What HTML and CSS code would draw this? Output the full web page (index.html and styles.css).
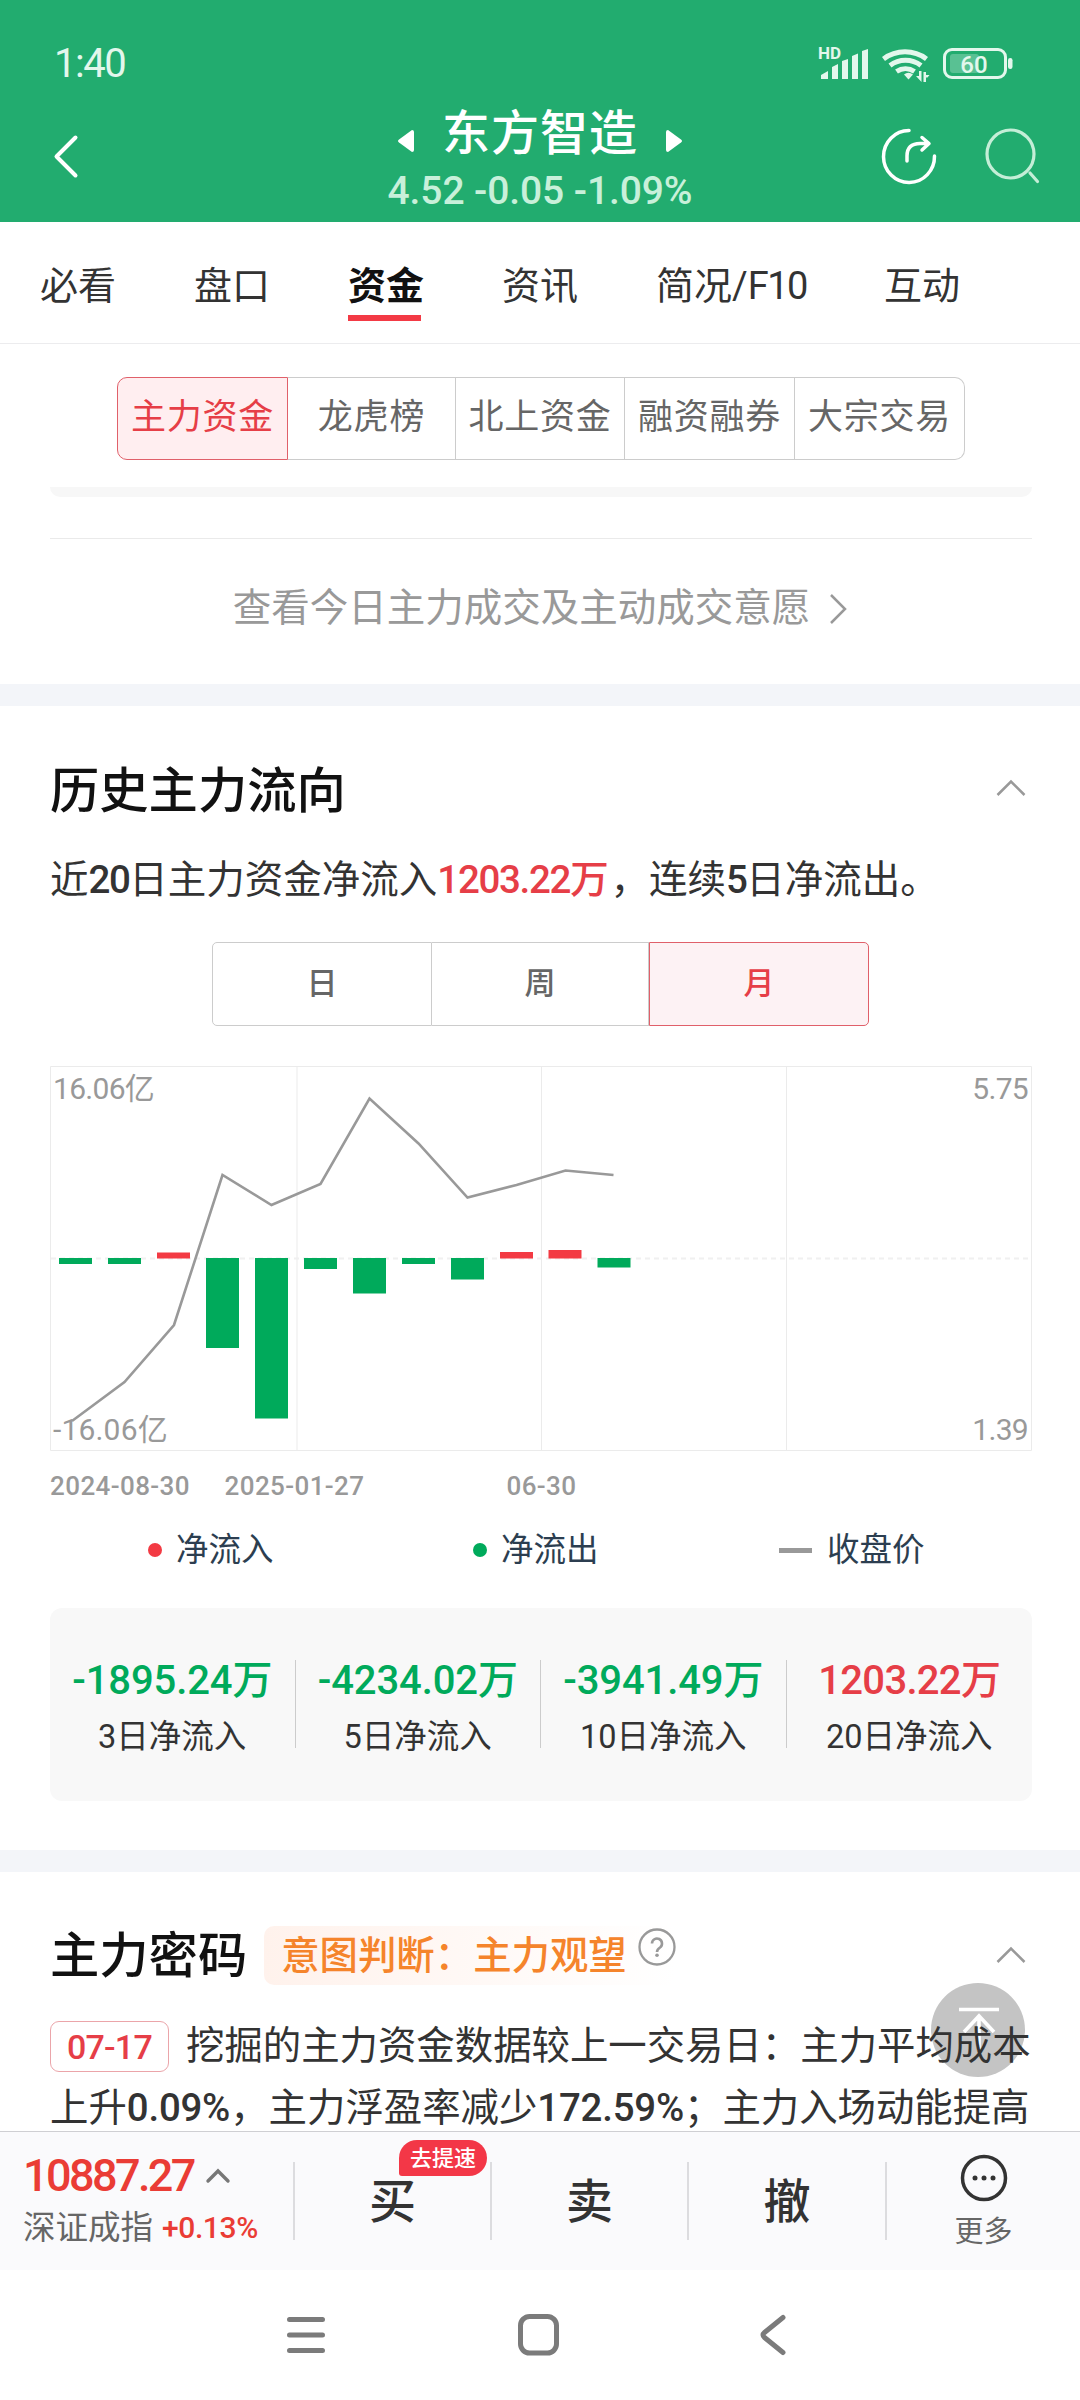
FILE: index.html
```html
<!DOCTYPE html>
<html lang="zh-CN">
<head>
    <meta charset="UTF-8">
    <meta name="viewport" content="width=device-width, initial-scale=1.0">
    <title>东方智造 - 资金</title>
    <link rel="stylesheet" href="styles.css">
</head>
<body>
    <header class="header">
        <div class="status-bar">
            <span class="time">1:40</span>
            <svg class="status-icons" width="200" height="44" viewBox="0 0 200 44" fill="none">
                <text class="hd" x="4" y="18">HD</text>
                <g fill="#e3f7ec">
                    <path d="M7 38v-4l7-4v8zM18 38V26l6-3v15zM28 38V20l6-2v20zM38 38V15l6-2.500v25.500zM48 38V10l6-2v30z"></path>
                    <path d="M90 33.500a7 7 0 0 1 9 0l-4.500 5z"></path>
                    <path d="M102 35h3v-5h2.500v11zM109.500 41V31h2.500v3h3.500l-2 2.500h-1.500V41z"></path>
                </g>
                <g stroke="#e3f7ec" stroke-width="5">
                    <path d="M69.500 18a36 36 0 0 1 43 0"></path>
                    <path d="M76 24.500a26 26 0 0 1 31 0"></path>
                    <path d="M82.500 30.500a16 16 0 0 1 18 0"></path>
                </g>
                <rect x="130.500" y="8.500" width="61" height="28" rx="7.500" stroke="#e3f7ec" stroke-width="3"></rect>
                <rect x="136" y="13" width="29" height="19" rx="3" fill="#fff" opacity=".25"></rect>
                <rect x="194" y="17" width="4.500" height="11" rx="2.200" fill="#e3f7ec"></rect>
                <text class="battery" x="160" y="31.500" text-anchor="middle">60</text>
            </svg>
        </div>
        <div class="app-bar">
            <svg width="30" height="50" viewBox="0 0 30 50" fill="none" stroke="#fff" stroke-width="4" stroke-linecap="round" stroke-linejoin="round">
                <path d="M23.500 6.500L4.500 25.500l19 19"></path>
            </svg>
            <div class="stock">
                <div class="stock-name">
                    <svg width="18" height="24" viewBox="0 0 18 24"><path d="M15 1q2 0 2 2v18q0 2-2 2L2 13.500q-2-1.500 0-3z" fill="#fff"></path></svg>
                    <h1>东方智造</h1>
                    <svg width="18" height="24" viewBox="0 0 18 24"><path d="M3 1Q1 1 1 3v18q0 2 2 2l13-9.500q2-1.500 0-3z" fill="#fff"></path></svg>
                </div>
                <p class="quote">4.52 -0.05 -1.09%</p>
            </div>
            <div class="app-actions">
                <svg width="60" height="60" viewBox="0 0 60 60" fill="none" stroke="#fff" stroke-width="3.500" stroke-linecap="round" stroke-linejoin="round">
                    <path d="M30 4.500A25.500 26 0 1 0 55.500 30"></path>
                    <path d="M28 35v-5q0-12.500 13-12.500h8.500M43 11.500l7 6-7 6.500"></path>
                </svg>
                <svg width="60" height="60" viewBox="0 0 60 60" fill="none" stroke="#c4eed7" stroke-width="3.200" stroke-linecap="round">
                    <ellipse cx="27.500" cy="28" rx="23.500" ry="24"></ellipse>
                    <path d="M47 47l7.500 8.500"></path>
                </svg>
            </div>
        </div>
    </header>

    <nav class="tabs">
        <a>必看</a>
        <a>盘口</a>
        <a class="active">资金</a>
        <a>资讯</a>
        <a>简况/<span class="num">F10</span></a>
        <a>互动</a>
    </nav>

    <main class="content">
        <div class="segment">
            <span class="active">主力资金</span>
            <span>龙虎榜</span>
            <span>北上资金</span>
            <span>融资融券</span>
            <span>大宗交易</span>
        </div>
        <div class="panel-end"></div>
        <a class="more-link">查看今日主力成交及主动成交意愿
            <svg width="20" height="32" viewBox="0 0 20 32" fill="none" stroke="#999" stroke-width="2.500"><path d="M2 2l14 14L2 30"></path></svg>
        </a>

        <section class="history">
            <div class="section-head">
                <h2>历史主力流向</h2>
                <svg class="fold" width="30" height="18" viewBox="0 0 30 18"><path d="M1.500 16L15 2.500 28.500 16"></path></svg>
            </div>
            <p class="summary">近<span class="num">20</span>日主力资金净流入<b class="num">1203.22万</b>，连续<span class="num">5</span>日净流出。</p>
            <div class="period">
                <span>日</span>
                <span>周</span>
                <span class="active">月</span>
            </div>
            <svg class="chart" width="982" height="386" viewBox="50 1066 982 386">
                <g class="grid">
                    <path d="M50.500 1066.500h981v384h-981z"></path>
                    <path d="M297 1066v384M541.500 1066v384M786.500 1066v384"></path>
                    <path class="zero" d="M51 1258.500h980"></path>
                </g>
                <g class="out">
                    <rect x="59" y="1258" width="33" height="6"></rect>
                    <rect x="108" y="1258" width="33" height="6"></rect>
                    <rect x="206" y="1258" width="33" height="90"></rect>
                    <rect x="255" y="1258" width="33" height="160.500"></rect>
                    <rect x="304" y="1258" width="33" height="11"></rect>
                    <rect x="353" y="1258" width="33" height="35.500"></rect>
                    <rect x="402" y="1258" width="33" height="6"></rect>
                    <rect x="451" y="1258" width="33" height="21.500"></rect>
                    <rect x="597.500" y="1258" width="33" height="9.500"></rect>
                </g>
                <g class="in">
                    <rect x="157" y="1252.500" width="33" height="6"></rect>
                    <rect x="500" y="1252" width="33" height="6.500"></rect>
                    <rect x="548.500" y="1250" width="33" height="8.500"></rect>
                </g>
                <polyline class="price" points="72,1421 124.500,1382 174,1325 222.500,1175 271.500,1205 320.500,1184 369.500,1098.500 418.500,1143.500 467.500,1197.500 516.500,1185 565.500,1170.500 613.500,1175"></polyline>
                <g class="axis">
                    <text x="53" y="1098.500">16.06亿</text>
                    <text x="53" y="1439.500" textLength="114">-16.06亿</text>
                    <text x="1028" y="1098.500" text-anchor="end">5.75</text>
                    <text x="1028" y="1439.500" text-anchor="end">1.39</text>
                </g>
            </svg>
            <div class="dates">
                <span>2024-08-30</span>
                <span>2025-01-27</span>
                <span>06-30</span>
            </div>
            <div class="legend">
                <span><i class="dot dot-in"></i>净流入</span>
                <span><i class="dot dot-out"></i>净流出</span>
                <span><i class="dash"></i>收盘价</span>
            </div>
            <div class="stats">
                <div class="stat"><b>-1895.24万</b><span>3日净流入</span></div>
                <div class="stat"><b>-4234.02万</b><span>5日净流入</span></div>
                <div class="stat"><b>-3941.49万</b><span>10日净流入</span></div>
                <div class="stat up"><b>1203.22万</b><span>20日净流入</span></div>
            </div>
        </section>

        <section class="code">
            <div class="section-head">
                <h2>主力密码</h2>
                <div class="intent">意图判断：主力观望
                    <svg width="40" height="40" viewBox="0 0 40 40" fill="none" stroke="#999" stroke-width="2.300">
                        <circle cx="20" cy="20" r="17.500"></circle>
                        <path d="M15 16.500a5 5 0 1 1 8 4q-3 2-3 4.500" stroke-width="2.600"></path>
                        <circle cx="20" cy="28.300" r="1.800" fill="#999" stroke="none"></circle>
                    </svg>
                </div>
                <svg class="fold" width="30" height="18" viewBox="0 0 30 18"><path d="M1.500 16L15 2.500 28.500 16"></path></svg>
            </div>
            <svg class="to-top" width="94" height="94" viewBox="0 0 94 94" fill="none" stroke="#fff" stroke-width="3.600">
                <circle cx="47" cy="47" r="47" fill="#c4c4c4" stroke="none"></circle>
                <path d="M28 26.500h40M33 49l15-16 15 16M48 33v35"></path>
            </svg>
            <p class="analysis"><span class="date-tag">07-17</span>挖掘的主力资金数据较上一交易日：主力平均成本<br>上升<b>0.09%</b>，主力浮盈率减少<b>172.59%</b>；主力入场动能提高</p>
        </section>
    </main>

    <footer class="trade-bar">
        <div class="index">
            <div class="index-value">10887.27
                <svg width="26" height="16" viewBox="0 0 26 16" fill="none" stroke="#777" stroke-width="3.400" stroke-linecap="round"><path d="M3 13L13 3l10 10"></path></svg>
            </div>
            <div class="index-name">深证成指<span>+0.13%</span></div>
        </div>
        <div class="trade">买<span class="badge">去提速</span></div>
        <div class="trade">卖</div>
        <div class="trade">撤</div>
        <div class="more">
            <svg width="48" height="48" viewBox="0 0 48 48" fill="#333">
                <circle cx="24" cy="24" r="21.500" fill="none" stroke="#333" stroke-width="3.500"></circle>
                <circle cx="15" cy="24" r="2.500"></circle>
                <circle cx="24" cy="24" r="2.500"></circle>
                <circle cx="33" cy="24" r="2.500"></circle>
            </svg>
            更多
        </div>
    </footer>

    <div class="system-nav">
        <svg width="46" height="46" viewBox="0 0 46 46"><path d="M6.500 7.500h33M6.500 23h33M6.500 38.500h33"></path></svg>
        <svg width="46" height="46" viewBox="0 0 46 46"><rect x="4.500" y="4.500" width="36" height="36.500" rx="9"></rect></svg>
        <svg width="46" height="46" viewBox="0 0 46 46"><path d="M34 5.500L15.500 20.500q-3 2.500 0 5L34 40.500"></path></svg>
    </div>
</body>
</html>
```
FILE: styles.css
```css
:root {
    --green: #22ac6f;
    --down: #00aa5b;
    --up: #e63e47;
    --text: #333;
    --gray: #999;
    --band: #f3f5f9;
}

* {
    margin: 0;
    padding: 0;
    box-sizing: border-box;
}

body {
    width: 1080px;
    height: 2400px;
    display: flex;
    flex-direction: column;
    overflow: hidden;
    background-color: #fff;
    color: var(--text);
    font-family: Roboto, "Noto Sans CJK SC", sans-serif;
}

svg {
    display: block;
    flex: none;
}

/* header */
.header {
    height: 222px;
    background-color: var(--green);
    color: #fff;
}

.status-bar {
    height: 96px;
    padding: 30px 66px 0 54px;
    display: flex;
    justify-content: space-between;
    align-items: center;
}

.time {
    font-size: 40px;
    color: #e3f7ec;
    letter-spacing: -1.5px;
}

.status-icons text {
    fill: #e3f7ec;
}

.hd {
    font-size: 17px;
    font-weight: 700;
}

.battery {
    font-size: 24px;
    font-weight: 500;
}

.app-bar {
    height: 126px;
    padding: 0 39px 0 52px;
    display: grid;
    grid-template-columns: 200px 1fr 200px;
    align-items: start;
}

.app-bar > svg {
    margin-top: 35px;
}

.stock {
    text-align: center;
}

.stock-name {
    display: flex;
    justify-content: center;
    align-items: center;
    gap: 27px;
    height: 74px;
    margin-left: -13px;
}

.stock-name svg {
    margin-top: 16px;
}

.stock-name h1 {
    padding-top: 2px;
    font-size: 48px;
    font-weight: 500;
    letter-spacing: 1px;
    line-height: 76px;
}

.quote {
    margin-left: -13px;
    font-size: 39px;
    font-weight: 500;
    line-height: 42px;
    letter-spacing: -.1px;
    color: #c8f0da;
}

.app-actions {
    display: flex;
    justify-content: flex-end;
    gap: 44px;
    margin: 30px -2px 0 0;
}

/* top tabs */
.tabs {
    height: 122px;
    padding-left: 40px;
    display: flex;
    gap: 77px;
    border-bottom: 1px solid #ececee;
    font-size: 38px;
    line-height: 129px;
    white-space: nowrap;
}

.tabs a {
    min-width: 77px;
    height: 99px;
}

.tabs .active {
    width: 73px;
    min-width: 0;
    margin-right: 4px;
    color: #111;
    font-weight: 700;
    border-bottom: 6px solid #f33a45;
}

/* content */
.content {
    flex: 1;
    min-height: 0;
    overflow: hidden;
}

.segment,
.period {
    display: grid;
    text-align: center;
}

.segment {
    width: 848px;
    height: 83px;
    margin: 33px 0 0 117px;
    grid-template-columns: 171px 168px 169px 170px 170px;
    font-size: 35px;
    letter-spacing: .8px;
    line-height: 80px;
    color: #666;
}

.segment span,
.period span {
    border: 1px solid #ccc;
    border-left-width: 0;
}

.segment span:first-child {
    border-radius: 10px 0 0 10px;
}

.segment span:last-child {
    border-radius: 0 10px 10px 0;
}

.segment .active,
.period .active {
    color: var(--up);
    border: 1px solid #e0606a;
}

.segment .active {
    background-color: #ffeef0;
}

.panel-end {
    height: 10px;
    margin: 27px 48px 0 50px;
    background-color: #f7f7f7;
    border-radius: 0 0 10px 10px;
}

.more-link {
    height: 146px;
    margin: 41px 48px 0 50px;
    padding-top: 4px;
    border-top: 1px solid #eaeaea;
    display: flex;
    justify-content: center;
    font-size: 38.5px;
    line-height: 129px;
    color: var(--gray);
}

.more-link svg {
    margin: 50px 0 0 19px;
}

.history {
    height: 1166px;
    padding: 0 48px 0 50px;
    border-top: 22px solid var(--band);
}

.section-head {
    display: flex;
    align-items: center;
    height: 60px;
}

.section-head h2 {
    font-size: 49.3px;
    font-weight: 500;
    line-height: 60px;
    padding-top: 2px;
    color: #111;
}

.fold {
    margin: 0 6px 0 auto;
    fill: none;
    stroke: var(--gray);
    stroke-width: 2.5;
}

.history .section-head {
    margin-top: 54px;
}

.history .fold {
    margin-top: -4px;
}

.summary {
    margin-top: 29px;
    font-size: 38.5px;
    line-height: 61px;
    height: 60px;
    white-space: nowrap;
}

.num {
    letter-spacing: -1.5px;
}

.summary span.num {
    font-weight: 500;
}

.summary b {
    margin-right: 3px;
    font-weight: 500;
    letter-spacing: -1.3px;
    color: var(--up);
}

.period {
    width: 657px;
    height: 83px;
    margin: 33px 0 0 162px;
    grid-template-columns: 220px 217px 220px;
    font-size: 31px;
    font-weight: 500;
    line-height: 82px;
    color: #666;
}

.period span:first-child {
    border-left-width: 1px;
    border-radius: 5px 0 0 5px;
}

.period span:last-child {
    border-radius: 0 5px 5px 0;
}

.period .active {
    background-color: #fdf2f4;
}

/* chart */
.chart {
    margin-top: 41px;
}

.grid {
    fill: none;
    stroke: #ebebeb;
    stroke-width: 1;
}

.grid .zero {
    stroke: #f0f0f0;
    stroke-width: 2;
    stroke-dasharray: 5 4;
}

.in {
    fill: #f33a43;
}

.out {
    fill: var(--down);
}

.price {
    fill: none;
    stroke: var(--gray);
    stroke-width: 2.6;
}

.axis {
    fill: var(--gray);
    font-size: 30px;
    letter-spacing: -.7px;
}

.dates {
    display: grid;
    grid-template-columns: 140px 209px 285px;
    margin-top: 18px;
    font-size: 26px;
    font-weight: 500;
    letter-spacing: .4px;
    line-height: 32px;
    color: var(--gray);
    text-align: center;
    white-space: nowrap;
}

.legend {
    display: grid;
    grid-template-columns: 325px 306px 1fr;
    padding-left: 98px;
    margin-top: 26px;
    font-size: 32.5px;
    line-height: 44px;
    color: #2c3e50;
}

.legend span {
    display: flex;
    align-items: center;
}

.dot {
    width: 14px;
    height: 14px;
    margin-right: 14px;
    border-radius: 50%;
}

.dot-in {
    background-color: #f33a43;
}

.dot-out {
    background-color: var(--down);
}

.dash {
    width: 33px;
    height: 5px;
    margin-right: 15px;
    background-color: var(--gray);
}

.stats {
    height: 193px;
    margin-top: 36px;
    padding: 52px 0 53px;
    display: grid;
    grid-template-columns: repeat(4, 1fr);
    background-color: #f8f8f8;
    border-radius: 12px;
}

.stat {
    display: flex;
    flex-direction: column;
    align-items: center;
    height: 88px;
    border-right: 1px solid #ccc;
}

.stat:last-child {
    border-right: none;
}

.stat b {
    font-size: 40px;
    font-weight: 500;
    line-height: 41px;
    letter-spacing: -.1px;
    color: var(--down);
}

.stat.up b {
    letter-spacing: -.7px;
    color: var(--up);
}

.stat span {
    margin-top: 17px;
    font-size: 32.5px;
    line-height: 38px;
}

/* main force code */
.code {
    position: relative;
    padding: 0 48px 0 50px;
    border-top: 22px solid var(--band);
}

.code .section-head {
    margin-top: 53px;
}

.code .section-head h2 {
    margin-right: 17px;
}

.intent {
    display: flex;
    width: 412px;
    height: 59px;
    padding-left: 17px;
    font-size: 38.4px;
    font-weight: 500;
    line-height: 59px;
    color: #f5842b;
    white-space: nowrap;
    background: linear-gradient(90deg, #fff2ec, #fff);
    border-radius: 10px;
}

.intent svg {
    margin: 1px 0 0 10px;
}

.to-top {
    position: absolute;
    right: 55px;
    top: 111px;
}

.analysis {
    position: relative;
    margin-top: 30px;
    font-size: 38.4px;
    line-height: 62px;
    white-space: nowrap;
}

.analysis b {
    font-weight: 500;
    letter-spacing: -.2px;
}

.date-tag {
    display: inline-block;
    width: 119px;
    height: 51px;
    margin-right: 17px;
    border: 1px solid #eba5aa;
    border-radius: 9px;
    font-size: 34px;
    font-weight: 500;
    line-height: 50px;
    letter-spacing: -.8px;
    text-align: center;
    color: var(--up);
}

/* bottom trade bar */
.trade-bar {
    height: 139px;
    display: grid;
    grid-template-columns: 295px 197px 197px 198px 1fr;
    align-items: center;
    background-color: #fafafc;
    border-top: 1px solid #cfcfd3;
}

.index,
.trade {
    height: 78px;
    border-right: 2px solid #dcdcdf;
}

.index-value {
    display: flex;
    align-items: center;
    gap: 11px;
    margin-top: -12px;
    padding-left: 23px;
    font-size: 45px;
    font-weight: 500;
    letter-spacing: -2.6px;
    line-height: 52px;
    color: #ea3c35;
}

.index-name {
    display: flex;
    align-items: center;
    padding-left: 23px;
    font-size: 32.5px;
    line-height: 52px;
    color: #666;
}

.index-name span {
    margin-left: 9px;
    font-size: 30px;
    font-weight: 500;
    letter-spacing: -.4px;
    color: #ea3c35;
}

.trade {
    position: relative;
    font-size: 47px;
    font-weight: 500;
    line-height: 80px;
    text-align: center;
}

.badge {
    position: absolute;
    left: 104px;
    top: -22px;
    width: 88px;
    height: 36px;
    background-color: #f33747;
    border-radius: 18px 18px 18px 3px;
    font-size: 22px;
    line-height: 37px;
    color: #fff;
}

.more {
    display: flex;
    flex-direction: column;
    align-items: center;
    font-size: 29px;
    line-height: 48px;
    color: #666;
    padding-top: 8px;
}

.more svg {
    margin-bottom: 6px;
}

/* system navigation */
.system-nav {
    height: 130px;
    padding: 42px 285px 0 283px;
    display: flex;
    justify-content: space-between;
}

.system-nav svg {
    fill: none;
    stroke: #7b7b7b;
    stroke-width: 5;
    stroke-linecap: round;
}
```
